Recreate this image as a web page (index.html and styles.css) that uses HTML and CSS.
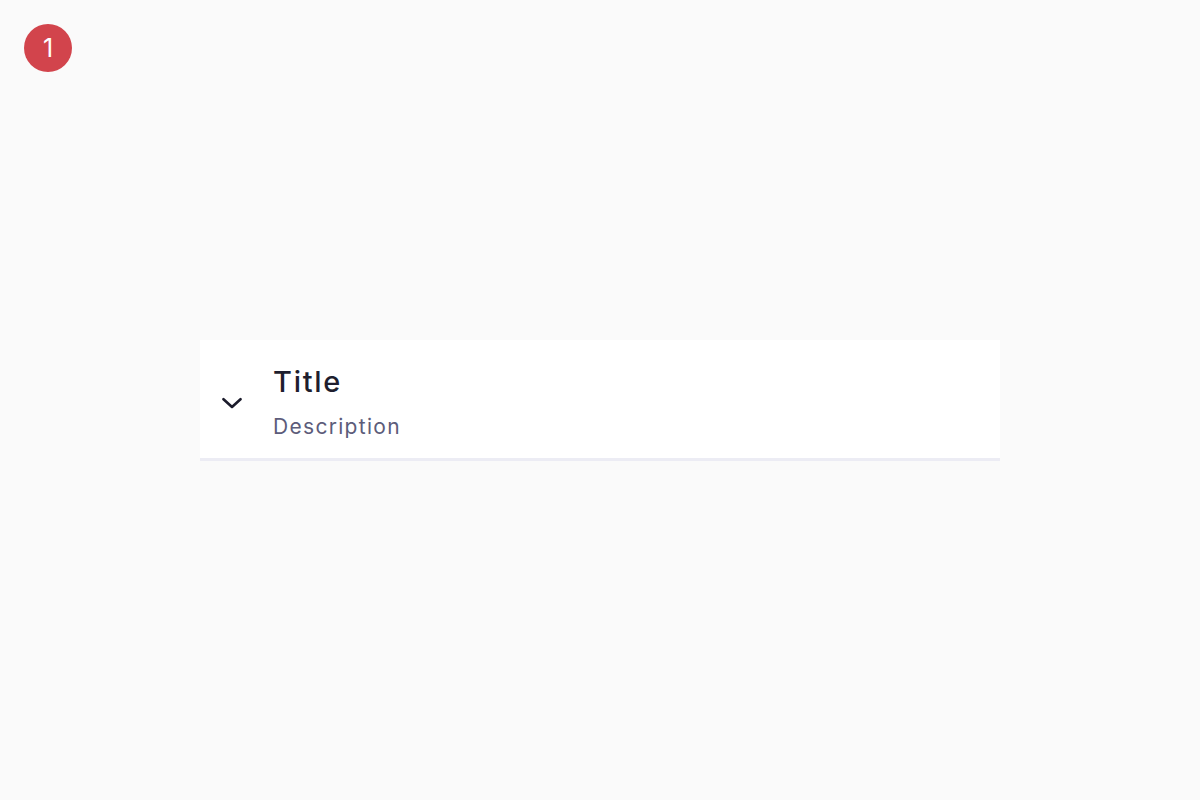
FILE: index.html
```html
<!DOCTYPE html>
<html lang="en">
<head>
<meta charset="utf-8">
<title>Accordion</title>
<link rel="stylesheet" href="styles.css">
</head>
<body>
<span class="badge">1</span>
<main class="stage">
  <section class="item">
    <span class="chevron">
      <svg width="20" height="20" viewBox="0 0 20 20" aria-hidden="true"><path d="M1.5 6.2 L10 14 L18.5 6.2" fill="none" stroke="#1b1b2b" stroke-width="2.6" stroke-linecap="round" stroke-linejoin="round"/></svg>
    </span>
    <div class="text">
      <div class="title">Title</div>
      <div class="desc">Description</div>
    </div>
  </section>
</main>
</body>
</html>
```
FILE: styles.css
```css
html, body {
  margin: 0;
  padding: 0;
}
body {
  background: #fafafa;
  font-family: Inter, "Noto Sans", sans-serif;
  min-height: 100vh;
}
.badge {
  position: absolute;
  left: 24px;
  top: 24px;
  width: 48px;
  height: 48px;
  border-radius: 50%;
  background: #d2444c;
  color: #fff;
  font-size: 25px;
  line-height: 48px;
  text-align: center;
  font-weight: 400;
}
.stage {
  height: 800px;
  display: flex;
  align-items: center;
  justify-content: center;
}
.item {
  width: 800px;
  box-sizing: border-box;
  background: #fff;
  border-bottom: 3px solid #ececf4;
  display: flex;
  align-items: center;
  padding: 24px 20px 17px 22px;
}
.chevron {
  width: 20px;
  height: 20px;
  display: flex;
  margin-right: 31px;
  margin-top: 2px;
}
.text {
  display: flex;
  flex-direction: column;
}
.title {
  font-size: 29px;
  line-height: 36px;
  color: #1e1e2e;
  font-weight: 450;
  letter-spacing: 1.7px;
}
.desc {
  margin-top: 13px;
  font-size: 21px;
  line-height: 28px;
  color: #5c5c7a;
  letter-spacing: 1.3px;
}
```
